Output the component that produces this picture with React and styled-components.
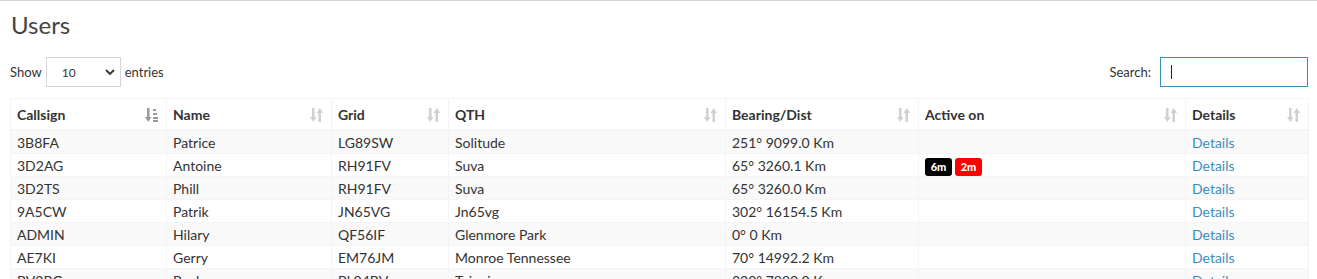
import React from 'react';
import styled, { createGlobalStyle } from 'styled-components';

const GlobalStyle = createGlobalStyle`
  body {
    margin: 0;
    background: #fff;
    font-family: Lato, "Liberation Sans", sans-serif;
    font-size: 14px;
    color: #333;
  }
`

const Page = styled.div`
  border-top: 1px solid #d2d6de;
  padding: 9px 9px 0 10px;
`

const Title = styled.h1`
  margin: 0 0 0 1px;
  font-size: 24px;
  font-weight: 400;
  line-height: 30px;
  color: #444;
`

const Controls = styled.div`
  display: flex;
  justify-content: space-between;
  align-items: center;
  margin-top: 17px;
  height: 30px;

  & label {
    display: flex;
    align-items: center;
    gap: 4px;
    font-size: 13px;
    color: #333;
  }
`

const Select = styled.div`
  position: relative;
  width: 75px;
  height: 30px;
  box-sizing: border-box;
  border: 1px solid #d2d6de;
  display: flex;
  align-items: center;
  padding-left: 15px;
  font-size: 12px;
  color: #333;

  & svg {
    position: absolute;
    right: 5px;
    top: 11px;
  }
`

const SearchInput = styled.div`
  width: 148px;
  height: 30px;
  box-sizing: border-box;
  border: 1px solid #3c8dbc;
  margin-left: 5px;
  display: flex;
  align-items: center;
  padding-left: 10px;

  &::before {
    content: '';
    width: 1px;
    height: 14px;
    background: #222;
  }
`

const Table = styled.table`
  margin-top: 11px;
  width: 1298px;
  table-layout: fixed;
  border-collapse: collapse;
  border: 1px solid #f4f4f4;
`

const Th = styled.th`
  position: relative;
  text-align: left;
  font-weight: 700;
  padding: 6px 6px 4px;
  line-height: 20px;
  border: 1px solid #f4f4f4;
  border-bottom: 2px solid #f4f4f4;
  color: #333;

  & svg {
    position: absolute;
    right: 8px;
    top: 9px;
  }
`

const Row = styled.tr`
  background: ${p => (p.$odd ? '#f9f9f9' : '#fff')};
`

const Td = styled.td`
  padding: 2px 6px 0;
  line-height: 20px;
  border: 1px solid #f4f4f4;
  white-space: nowrap;
  overflow: hidden;
  color: #333;
`

const Badge = styled.span`
  display: inline-block;
  width: 27px;
  height: 18px;
  line-height: 18px;
  margin-right: 3px;
  border-radius: 3px;
  background: ${p => p.$bg};
  color: #fff;
  font-size: 11px;
  font-weight: 900;
  text-align: center;
  vertical-align: middle;
`

const Link = styled.a`
  color: #3c8dbc;
  text-decoration: none;
`

const SortIcon = ({ active }) => (
  <svg width="13" height="14" viewBox="0 0 13 14">
    <g fill={active ? '#999' : '#d0d0d0'}>
      <rect x="2" y="0" width="2.5" height="10" />
      <polygon points="0,9 6.5,9 3.25,14" />
      {active ? (
        <>
          <rect x="8" y="1" width="3" height="2" />
          <rect x="8" y="5" width="4" height="2" />
          <rect x="8" y="9" width="5" height="2" />
          <rect x="8" y="12" width="5" height="2" />
        </>
      ) : (
        <>
          <rect x="8.5" y="4" width="2.5" height="10" />
          <polygon points="6.5,5 13,5 9.75,0" />
        </>
      )}
    </g>
  </svg>
)

const columns = [
  { name: 'Callsign', width: 156 },
  { name: 'Name', width: 165 },
  { name: 'Grid', width: 117 },
  { name: 'QTH', width: 277 },
  { name: 'Bearing/Dist', width: 193 },
  { name: 'Active on', width: 267 },
  { name: 'Details', width: 123 },
]

const users = [
  ['3B8FA', 'Patrice', 'LG89SW', 'Solitude', '251° 9099.0 Km', []],
  ['3D2AG', 'Antoine', 'RH91FV', 'Suva', '65° 3260.1 Km', ['6m', '2m']],
  ['3D2TS', 'Phill', 'RH91FV', 'Suva', '65° 3260.0 Km', []],
  ['9A5CW', 'Patrik', 'JN65VG', 'Jn65vg', '302° 16154.5 Km', []],
  ['ADMIN', 'Hilary', 'QF56IF', 'Glenmore Park', '0° 0 Km', []],
  ['AE7KI', 'Gerry', 'EM76JM', 'Monroe Tennessee', '70° 14992.2 Km', []],
  ['BV2BG', 'Paul', 'PL04BV', 'Taipei', '320° 7880.0 Km', []],
]

const bandColors = { '6m': '#000', '2m': '#f00' }

const App = () => (
  <Page>
    <GlobalStyle />
    <Title>Users</Title>
    <Controls>
      <label>
        Show
        <Select>
          10
          <svg width="10" height="7" viewBox="0 0 10 7">
            <path d="M1 1 L5 5 L9 1" stroke="#333" strokeWidth="1.8" fill="none" />
          </svg>
        </Select>
        entries
      </label>
      <label>
        Search:
        <SearchInput />
      </label>
    </Controls>
    <Table>
      <colgroup>
        {columns.map(c => <col key={c.name} style={{ width: c.width }} />)}
      </colgroup>
      <thead>
        <tr>
          {columns.map((c, i) => (
            <Th key={c.name}>
              {c.name}
              <SortIcon active={i === 0} />
            </Th>
          ))}
        </tr>
      </thead>
      <tbody>
        {users.map((u, i) => (
          <Row key={u[0]} $odd={i % 2 === 0}>
            <Td>{u[0]}</Td>
            <Td>{u[1]}</Td>
            <Td>{u[2]}</Td>
            <Td>{u[3]}</Td>
            <Td>{u[4]}</Td>
            <Td>
              {u[5].map(b => <Badge key={b} $bg={bandColors[b]}>{b}</Badge>)}
            </Td>
            <Td><Link href="#">Details</Link></Td>
          </Row>
        ))}
      </tbody>
    </Table>
  </Page>
)

export default App
